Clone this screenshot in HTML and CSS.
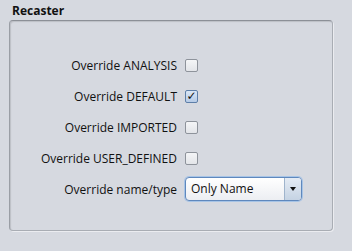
FILE: index.html
```html
<!DOCTYPE html>
<html lang="en">
<head>
    <meta charset="UTF-8">
    <title>Recaster</title>
    <link rel="stylesheet" href="styles.css">
</head>
<body>
    <div class="panel">
        <div class="panel-title">Recaster</div>
        <div class="group">
            <div class="row">
                <span class="label">Override ANALYSIS</span>
                <span class="check"></span>
            </div>
            <div class="row">
                <span class="label">Override DEFAULT</span>
                <span class="check checked">&#10003;</span>
            </div>
            <div class="row">
                <span class="label">Override IMPORTED</span>
                <span class="check"></span>
            </div>
            <div class="row">
                <span class="label">Override USER_DEFINED</span>
                <span class="check"></span>
            </div>
            <div class="row">
                <span class="label">Override name/type</span>
                <div class="combo">
                    <span class="combo-text">Only Name</span>
                    <span class="combo-arrow"></span>
                </div>
            </div>
        </div>
    </div>
</body>
</html>
```

FILE: styles.css
```css
/* Page */
body {
    margin: 0;
    background: #d6d9e0;
    font-family: "Open Sans", "DejaVu Sans", sans-serif;
    font-size: 12px;
    color: #111;
}

.panel {
    padding: 3px 19px 20px 9px;
}

.panel-title {
    font-weight: bold;
    font-size: 12px;
    padding-left: 3px;
    height: 17px;
    line-height: 16px;
}

/* Group box */
.group {
    height: 211px;
    box-sizing: border-box;
    border: 1px solid #a9adb4;
    border-top-color: #8c9097;
    border-left-color: #9a9ea5;
    border-radius: 4px;
    box-shadow: inset 1px 1px 1px rgba(0, 0, 0, 0.12), 1px 1px 0 rgba(255, 255, 255, 0.5);
    padding-top: 36px;
    display: flex;
    flex-direction: column;
    gap: 15px;
}

.row {
    display: flex;
    align-items: center;
    height: 16px;
}

.label {
    width: 167px;
    text-align: right;
    padding-right: 8px;
    white-space: nowrap;
}

/* Checkbox */
.check {
    width: 11px;
    height: 11px;
    border: 1px solid #8e939b;
    border-radius: 2px;
    background: linear-gradient(#f4f5f7, #e3e5e9);
    font-family: "DejaVu Sans", sans-serif;
    font-size: 12px;
    font-weight: bold;
    line-height: 11px;
    text-align: center;
    color: #111;
}

.check.checked {
    background: linear-gradient(#d9e6f6, #b6cbe6);
    border-color: #5e7fa8;
}

/* Combo box */
.combo {
    display: flex;
    width: 115px;
    height: 22px;
    border: 1px solid #5f88bd;
    border-radius: 4px;
    box-shadow: 0 0 0 1px #a7c4e6;
    background: linear-gradient(#ffffff, #eceef2);
    overflow: hidden;
}

.combo-text {
    flex: 1;
    padding-left: 5px;
    line-height: 22px;
    font-size: 12px;
}

.combo-arrow {
    width: 16px;
    border-left: 1px solid #9fb4cc;
    background: linear-gradient(#e4ebf4, #c5d3e3);
    position: relative;
}

.combo-arrow::after {
    content: "";
    position: absolute;
    left: 5px;
    top: 9px;
    border-left: 3px solid transparent;
    border-right: 3px solid transparent;
    border-top: 4px solid #111;
}
```
